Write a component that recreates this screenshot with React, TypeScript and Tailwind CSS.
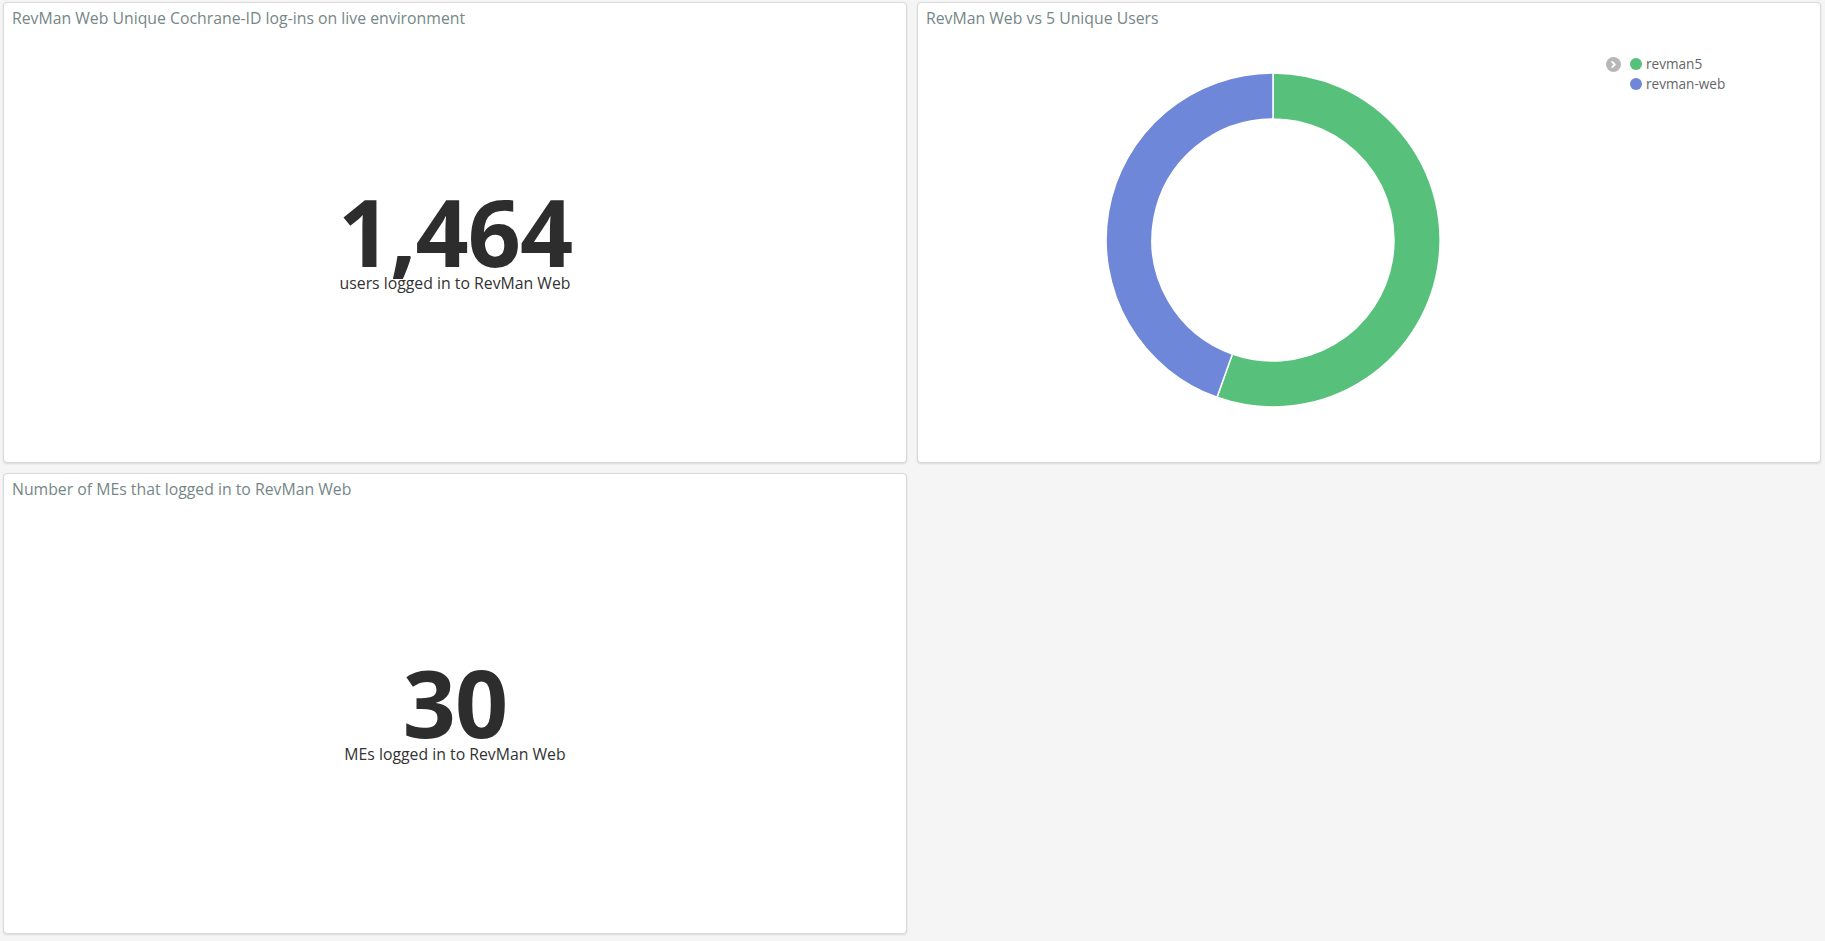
import React from "react";

const font = { fontFamily: '"Open Sans", "Noto Sans", sans-serif' };

function Panel({ title, children }: { title: string; children?: React.ReactNode }) {
  return (
    <div className="flex flex-col bg-white border border-[#d9d9d9] rounded-[4px] shadow-[0_1px_2px_rgba(0,0,0,0.12)] overflow-hidden min-h-0">
      <div className="h-[30px] shrink-0 px-[8px] pt-[4px] text-[15.8px] leading-[22px] text-[#768787] whitespace-nowrap">
        {title}
      </div>
      {children}
    </div>
  );
}

function Metric({ value, label }: { value: string; label: string }) {
  return (
    <div className="flex-1 flex flex-col items-center justify-center pb-[12px]">
      <div className="text-[93px] font-bold leading-[82px] text-[#2d2d2d] tracking-[-1px]">{value}</div>
      <div className="text-[15.8px] leading-[20px] text-[#333] mt-[1px]">{label}</div>
    </div>
  );
}

function Donut() {
  return (
    <svg width="340" height="340" viewBox="-170 -170 340 340">
      <path
        d="M 0 -167 A 167 167 0 1 1 -56.0 157.3 L -40.6 114.0 A 121 121 0 1 0 0 -121 Z"
        fill="#57c17b"
        stroke="#ffffff"
        strokeWidth="1.5"
      />
      <path
        d="M -56.0 157.3 A 167 167 0 0 1 0 -167 L 0 -121 A 121 121 0 0 0 -40.6 114.0 Z"
        fill="#6f87d8"
        stroke="#ffffff"
        strokeWidth="1.5"
      />
    </svg>
  );
}

export default function App() {
  return (
    <div
      className="w-full h-[941px] bg-[#f5f5f5] pt-[2px] pl-[3px] pr-[4px] grid grid-cols-2 grid-rows-[461px_461px] gap-[10px] overflow-hidden"
      style={font}
    >
      <Panel title="RevMan Web Unique Cochrane-ID log-ins on live environment">
        <Metric value="1,464" label="users logged in to RevMan Web" />
      </Panel>
      <Panel title="RevMan Web vs 5 Unique Users">
        <div className="flex-1 flex flex-row">
          <div className="w-[710px] flex justify-center pt-[37px]">
            <Donut />
          </div>
          <div className="relative flex-1 pt-[21px] pl-[2px]">
            <div className="absolute left-[-22px] top-[24px] w-[15px] h-[15px] rounded-full bg-[#b7b7b7] flex items-center justify-center">
              <svg width="9" height="9" viewBox="0 0 10 10">
                <path d="M3.5 2 L6.5 5 L3.5 8" fill="none" stroke="#ffffff" strokeWidth="2" strokeLinecap="round" strokeLinejoin="round" />
              </svg>
            </div>
            <div className="flex flex-col gap-[1px] text-[13.6px] leading-[19px] text-[#666]">
              <div className="flex items-center gap-[4px]">
                <span className="w-[12px] h-[12px] rounded-full bg-[#57c17b]" />
                <span>revman5</span>
              </div>
              <div className="flex items-center gap-[4px]">
                <span className="w-[12px] h-[12px] rounded-full bg-[#6f87d8]" />
                <span>revman-web</span>
              </div>
            </div>
          </div>
        </div>
      </Panel>
      <Panel title="Number of MEs that logged in to RevMan Web">
        <Metric value="30" label="MEs logged in to RevMan Web" />
      </Panel>
      <div />
    </div>
  );
}
